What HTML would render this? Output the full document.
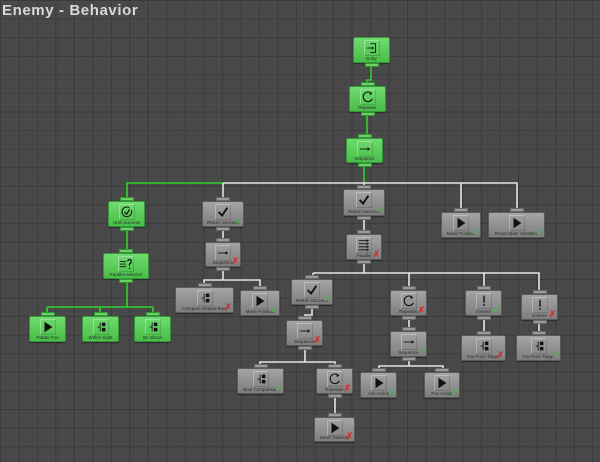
<!DOCTYPE html>
<html><head><meta charset="utf-8"><style>
*{margin:0;padding:0;box-sizing:border-box}
body{width:600px;height:462px;overflow:hidden;position:relative;background-color:#4a4a4a;
background-image:linear-gradient(90deg,#3b3b3b 1px,transparent 1px),linear-gradient(#3b3b3b 1px,transparent 1px),linear-gradient(90deg,#464646 1px,transparent 1px),linear-gradient(#464646 1px,transparent 1px);
background-size:18.5px 18.6px,18.5px 18.6px,4.6px 4.65px,4.6px 4.65px;font-family:"Liberation Sans",sans-serif}
h1{position:absolute;left:2px;top:2px;font-size:15px;font-weight:bold;color:#d8d8d8;letter-spacing:0.6px}
svg.l{position:absolute;left:0;top:0}
.nd{position:absolute;border:1px solid #5a5a5a;border-radius:2px;background:linear-gradient(#a4a4a4,#7e7e7e);box-shadow:0 1px 1px #2a2a2a}
.nd.g{background:linear-gradient(#70db70,#48bd48);border-color:#36963a}
.nd i{position:absolute;left:50%;margin-left:-7px;width:14px;height:4px;background:#9a9a9a;border:1px solid #666}
.nd.g i{background:#6ccf6c;border-color:#339433}
.nd i.t{top:-5px}.nd i.b{bottom:-5px}
.ic{position:absolute;left:50%;top:2px;margin-left:-8px;width:16px;height:16px;border:1px solid rgba(255,255,255,.3);border-right-color:rgba(0,0,0,.15);border-bottom-color:rgba(0,0,0,.15)}
.ic svg{width:14px;height:14px}
.nd span{position:absolute;bottom:1px;left:0;right:0;text-align:center;font-size:4.5px;color:#2a2a2a;white-space:nowrap}
.nd b{position:absolute;right:1px;bottom:0;font-size:9px;line-height:9px;font-weight:bold}
.x{color:#d23030}.k{color:#3fbf3f}
</style></head><body>
<svg width="0" height="0" style="position:absolute">
<defs>
<symbol id="play" viewBox="0 0 16 16"><path d="M4 2L13 8L4 14Z" fill="#111"/></symbol>
<symbol id="chk" viewBox="0 0 16 16"><path d="M3 8L7 12L13 3" stroke="#111" stroke-width="2.2" fill="none"/></symbol>
<symbol id="seq" viewBox="0 0 16 16"><path d="M2 8H12" stroke="#111" stroke-width="1"/><path d="M11 6L14 8L11 10Z" fill="#111"/></symbol>
<symbol id="rep" viewBox="0 0 16 16"><path d="M12 4A5.5 5.5 0 1 0 13 10" stroke="#111" stroke-width="1.2" fill="none"/><path d="M10 2L13 4L10 6Z" fill="#111"/></symbol>
<symbol id="entry" viewBox="0 0 16 16"><path d="M6 3H12V13H6" stroke="#111" fill="none"/><path d="M2 8H9" stroke="#111"/><path d="M8 6L10 8L8 10Z" fill="#111"/></symbol>
<symbol id="cond" viewBox="0 0 16 16"><path d="M7 3V13M7 8H4" stroke="#111" fill="none"/><rect x="9" y="3" width="4" height="4" fill="#111"/><rect x="9" y="9" width="4" height="4" fill="#111"/></symbol>
<symbol id="par" viewBox="0 0 16 16"><path d="M2 3H12M2 6.5H12M2 10H12M2 13.5H12" stroke="#111"/><path d="M11 1.5L14 3L11 4.5ZM11 5L14 6.5L11 8ZM11 8.5L14 10L11 11.5ZM11 12L14 13.5L11 15Z" fill="#111"/></symbol>
<symbol id="inv" viewBox="0 0 16 16"><rect x="7.2" y="2" width="1.6" height="8" fill="#111"/><rect x="7.2" y="11.5" width="1.6" height="2" fill="#111"/></symbol>
<symbol id="until" viewBox="0 0 16 16"><path d="M13 6A5.5 5.5 0 1 1 10.5 3" stroke="#111" stroke-width="1.2" fill="none"/><path d="M5 8L7.5 10.5L11 5" stroke="#111" stroke-width="1.4" fill="none"/></symbol>
<symbol id="psel" viewBox="0 0 16 16"><path d="M1 5H8M1 8H8M1 11H8" stroke="#111"/><path d="M10 5Q10 3 12 3Q14 3 14 5Q14 7 12 8V10M12 12V13.5" stroke="#111" stroke-width="1.4" fill="none"/></symbol>
</defs></svg>
<h1>Enemy - Behavior</h1>
<svg class="l" width="600" height="462" fill="none" stroke-width="1.6">
<g stroke="#2ed12e">
<path d="M371 63V80H367V86M367 112V135H364V138M364 163V183M223 183H127V201M127 227V253M127 279V307M47 307H153M47 307V316M100 307V316M153 307V316"/>
</g>
<g stroke="#e4e4e4">
<path d="M223 183H517V212M223 183V201M364 183V189M461 183V212M223 227V242M223 267V280H204V287M223 280H260V290M364 216V234M364 260V273M313 273H539V294M313 273V279M409 273V290M484 273V290M312 305V315H305V320M305 346V362H260V368M305 362H335V368M409 316V331M409 357V366H379V372M409 366H443V372M484 316V335M539 320V335M335 394V417"/>
</g>
</svg>

<div class="nd g" style="left:353px;top:37px;width:37px;height:26px"><i class="b"></i><div class="ic"><svg><use href="#entry"/></svg></div><span>Entry</span></div>
<div class="nd g" style="left:349px;top:86px;width:37px;height:26px"><i class="t"></i><i class="b"></i><div class="ic"><svg><use href="#rep"/></svg></div><span>Repeater</span></div>
<div class="nd g" style="left:346px;top:138px;width:37px;height:25px"><i class="t"></i><i class="b"></i><div class="ic"><svg><use href="#seq"/></svg></div><span>Sequence</span></div>
<div class="nd g" style="left:108px;top:201px;width:37px;height:26px"><i class="t"></i><i class="b"></i><div class="ic"><svg><use href="#until"/></svg></div><span>Until Success</span></div>
<div class="nd g" style="left:103px;top:253px;width:46px;height:26px"><i class="t"></i><i class="b"></i><div class="ic"><svg><use href="#psel"/></svg></div><span>Parallel Selector</span></div>
<div class="nd g" style="left:29px;top:316px;width:37px;height:26px"><i class="t"></i><div class="ic"><svg><use href="#play"/></svg></div><span>Rotate Pos</span></div>
<div class="nd g" style="left:82px;top:316px;width:37px;height:26px"><i class="t"></i><div class="ic"><svg><use href="#cond"/></svg></div><span>Within Sight</span></div>
<div class="nd g" style="left:134px;top:316px;width:37px;height:26px"><i class="t"></i><div class="ic"><svg><use href="#cond"/></svg></div><span>Be Shoot</span></div>

<div class="nd" style="left:202px;top:201px;width:42px;height:26px"><i class="t"></i><i class="b"></i><div class="ic"><svg><use href="#chk"/></svg></div><span>Return Success</span><b class="k">✓</b></div>
<div class="nd" style="left:343px;top:189px;width:42px;height:27px"><i class="t"></i><i class="b"></i><div class="ic"><svg><use href="#chk"/></svg></div><span>Return Success</span><b class="k">✓</b></div>
<div class="nd" style="left:441px;top:212px;width:40px;height:26px"><i class="t"></i><div class="ic"><svg><use href="#play"/></svg></div><span>Move Position</span><b class="k">✓</b></div>
<div class="nd" style="left:488px;top:212px;width:57px;height:26px"><i class="t"></i><div class="ic"><svg><use href="#play"/></svg></div><span>Reset State Variables</span><b class="k">✓</b></div>
<div class="nd" style="left:205px;top:242px;width:36px;height:25px"><i class="t"></i><i class="b"></i><div class="ic"><svg><use href="#seq"/></svg></div><span>Sequence</span><b class="x">✗</b></div>
<div class="nd" style="left:346px;top:234px;width:36px;height:26px"><i class="t"></i><i class="b"></i><div class="ic"><svg><use href="#par"/></svg></div><span>Parallel</span><b class="x">✗</b></div>
<div class="nd" style="left:175px;top:287px;width:59px;height:26px"><i class="t"></i><div class="ic"><svg><use href="#cond"/></svg></div><span>Compare Shared Bool</span><b class="x">✗</b></div>
<div class="nd" style="left:240px;top:290px;width:40px;height:26px"><i class="t"></i><div class="ic"><svg><use href="#play"/></svg></div><span>Move Position</span><b class="k">✓</b></div>
<div class="nd" style="left:291px;top:279px;width:42px;height:26px"><i class="t"></i><i class="b"></i><div class="ic"><svg><use href="#chk"/></svg></div><span>Return Success</span><b class="k">✓</b></div>
<div class="nd" style="left:390px;top:290px;width:37px;height:26px"><i class="t"></i><i class="b"></i><div class="ic"><svg><use href="#rep"/></svg></div><span>Repeater</span><b class="x">✗</b></div>
<div class="nd" style="left:465px;top:290px;width:37px;height:26px"><i class="t"></i><i class="b"></i><div class="ic"><svg><use href="#inv"/></svg></div><span>Inverter</span><b class="k">✓</b></div>
<div class="nd" style="left:521px;top:294px;width:37px;height:26px"><i class="t"></i><i class="b"></i><div class="ic"><svg><use href="#inv"/></svg></div><span>Inverter</span><b class="x">✗</b></div>
<div class="nd" style="left:286px;top:320px;width:37px;height:26px"><i class="t"></i><i class="b"></i><div class="ic"><svg><use href="#seq"/></svg></div><span>Sequence</span><b class="x">✗</b></div>
<div class="nd" style="left:390px;top:331px;width:37px;height:26px"><i class="t"></i><i class="b"></i><div class="ic"><svg><use href="#seq"/></svg></div><span>Sequence</span><b class="k">✓</b></div>
<div class="nd" style="left:461px;top:335px;width:45px;height:26px"><i class="t"></i><div class="ic"><svg><use href="#cond"/></svg></div><span>Far From Target</span><b class="x">✗</b></div>
<div class="nd" style="left:516px;top:335px;width:45px;height:26px"><i class="t"></i><div class="ic"><svg><use href="#cond"/></svg></div><span>Far From Target</span><b class="k">✓</b></div>
<div class="nd" style="left:237px;top:368px;width:47px;height:26px"><i class="t"></i><div class="ic"><svg><use href="#cond"/></svg></div><span>Bool Comparison</span><b class="k">✓</b></div>
<div class="nd" style="left:316px;top:368px;width:37px;height:26px"><i class="t"></i><i class="b"></i><div class="ic"><svg><use href="#rep"/></svg></div><span>Repeater</span><b class="x">✗</b></div>
<div class="nd" style="left:360px;top:372px;width:37px;height:26px"><i class="t"></i><div class="ic"><svg><use href="#play"/></svg></div><span>Aim Action</span><b class="k">✓</b></div>
<div class="nd" style="left:424px;top:372px;width:36px;height:26px"><i class="t"></i><div class="ic"><svg><use href="#play"/></svg></div><span>Fire Action</span><b class="k">✓</b></div>
<div class="nd" style="left:314px;top:417px;width:41px;height:25px"><i class="t"></i><div class="ic"><svg><use href="#play"/></svg></div><span>Move Towards</span><b class="x">✗</b></div>
</body></html>
